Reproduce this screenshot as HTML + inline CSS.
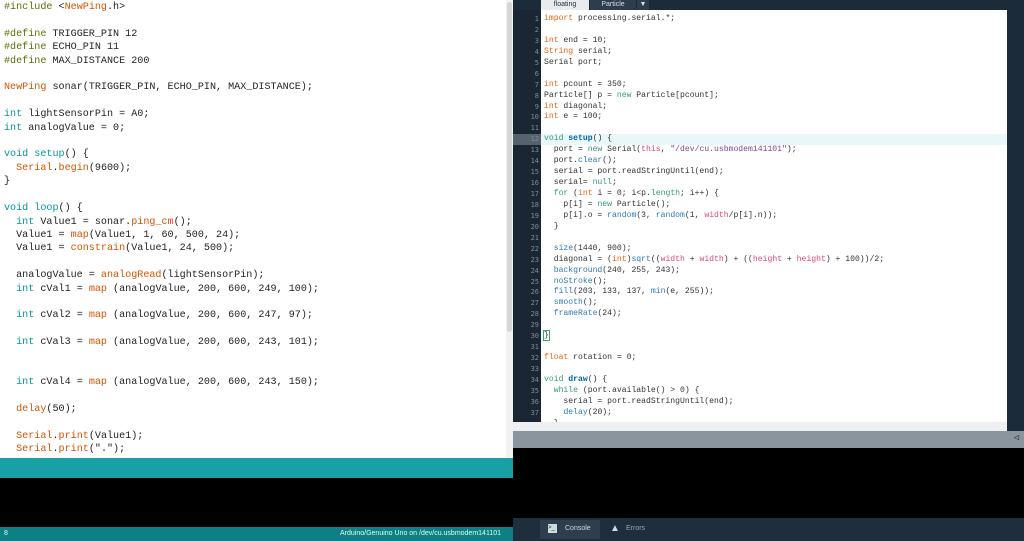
<!DOCTYPE html>
<html><head><meta charset="utf-8"><style>
*{margin:0;padding:0;box-sizing:border-box}
body{width:1024px;height:541px;overflow:hidden;position:relative;background:#000;font-family:"Liberation Mono",monospace}
#L{position:absolute;left:0;top:0;width:513px;height:458px;background:#fff;overflow:hidden}
#L pre{position:absolute;left:4px;top:1px;font-size:10.1px;line-height:13.4px;color:#222;font-family:"Liberation Mono",monospace}
.d{color:#5e6d03}.o{color:#d35400}.t{color:#00979c}
#lsb{position:absolute;left:506px;top:0;width:7px;height:458px;background:#f2f2f2}
#lsb div{position:absolute;left:1px;top:2px;width:5px;height:330px;background:#d6d6d6;border-radius:3px}
#R{position:absolute;left:513px;top:0;width:511px;height:541px;background:#1c2b3a}
#tabs{position:absolute;left:513px;top:0;height:10px;font:7px "Liberation Sans",sans-serif}
.tab{position:absolute;top:0;height:10px;line-height:9px;text-align:center}
#gut{position:absolute;left:513px;top:10px;width:28px;height:412px;background:#1a2633}
#gut pre{position:absolute;right:2px;top:4px;font-size:7px;line-height:10.94px;color:#7d8d9b;text-align:right}
#ed{position:absolute;left:541px;top:10px;width:466px;height:412px;background:#fff;overflow:hidden}
#ed pre{position:absolute;left:3px;top:4px;font-size:8.1px;line-height:10.94px;color:#333;font-family:"Liberation Mono",monospace}
.k{color:#e2661a}.g{color:#33997e}.f{color:#2f79b5}.s{color:#7d4793}.p{color:#d94a7a}.b{color:#006699;font-weight:bold}.v{color:#33997e}
#hl{position:absolute;left:0;top:124px;width:466px;height:11px;background:#e9f7fb}
#ghl{position:absolute;left:0;top:124px;width:28px;height:11px;background:#56636e}
</style></head><body>
<div id="L"><pre><span class="d">#include</span> &lt;<span class="o">NewPing</span>.h&gt;

<span class="d">#define</span> TRIGGER_PIN 12
<span class="d">#define</span> ECHO_PIN 11
<span class="d">#define</span> MAX_DISTANCE 200

<span class="o">NewPing</span> sonar(TRIGGER_PIN, ECHO_PIN, MAX_DISTANCE);

<span class="t">int</span> lightSensorPin = A0;
<span class="t">int</span> analogValue = 0;

<span class="t">void</span> <span class="t">setup</span>() {
  <span class="o">Serial</span>.<span class="o">begin</span>(9600);
}

<span class="t">void</span> <span class="t">loop</span>() {
  <span class="t">int</span> Value1 = sonar.<span class="o">ping_cm</span>();
  Value1 = <span class="o">map</span>(Value1, 1, 60, 500, 24);
  Value1 = <span class="o">constrain</span>(Value1, 24, 500);

  analogValue = <span class="o">analogRead</span>(lightSensorPin);
  <span class="t">int</span> cVal1 = <span class="o">map</span> (analogValue, 200, 600, 249, 100);

  <span class="t">int</span> cVal2 = <span class="o">map</span> (analogValue, 200, 600, 247, 97);

  <span class="t">int</span> cVal3 = <span class="o">map</span> (analogValue, 200, 600, 243, 101);


  <span class="t">int</span> cVal4 = <span class="o">map</span> (analogValue, 200, 600, 243, 150);

  <span class="o">delay</span>(50);

  <span class="o">Serial</span>.<span class="o">print</span>(Value1);
  <span class="o">Serial</span>.<span class="o">print</span>(".");</pre>
<div id="lsb"><div></div></div></div>
<div style="position:absolute;left:0;top:458px;width:513px;height:20px;background:#17a1a5"></div>
<div style="position:absolute;left:0;top:478px;width:513px;height:49px;background:#000"></div>
<div style="position:absolute;left:0;top:527px;width:513px;height:14px;background:#0f7f86;color:#dfe;font:7px 'Liberation Sans',sans-serif;line-height:14px">
<span style="position:absolute;left:4px">8</span><span style="position:absolute;right:12px">Arduino/Genuino Uno on /dev/cu.usbmodem141101</span></div>
<div id="R"></div>
<div id="tabs">
<div class="tab" style="left:28px;width:48px;background:#e8ecef;color:#1c2b3a">floating</div>
<div class="tab" style="left:77px;width:46px;background:#2c3d4e;color:#dde">Particle</div>
<div class="tab" style="left:124px;width:12px;background:#2c3d4e;color:#dde">▼</div>
</div>
<div id="gut"><div id="ghl"></div><pre>1
2
3
4
5
6
7
8
9
10
11
12
13
14
15
16
17
18
19
20
21
22
23
24
25
26
27
28
29
30
31
32
33
34
35
36
37</pre></div>
<div id="ed"><div id="hl"></div><pre><span class="k">import</span> processing.serial.*;

<span class="k">int</span> end = 10;
<span class="k">String</span> serial;
Serial port;

<span class="k">int</span> pcount = 350;
Particle[] p = <span class="g">new</span> Particle[pcount];
<span class="k">int</span> diagonal;
<span class="k">int</span> e = 100;

<span class="g">void</span> <span class="b">setup</span>() {
  port = <span class="g">new</span> Serial(<span class="p">this</span>, <span class="s">"/dev/cu.usbmodem141101"</span>);
  port.<span class="f">clear</span>();
  serial = port.readStringUntil(end);
  serial= <span class="g">null</span>;
  <span class="g">for</span> (<span class="k">int</span> i = 0; i&lt;p.<span class="g">length</span>; i++) {
    p[i] = <span class="g">new</span> Particle();
    p[i].o = <span class="f">random</span>(3, <span class="f">random</span>(1, <span class="p">width</span>/p[i].n));
  }

  <span class="f">size</span>(1440, 900);
  diagonal = (<span class="k">int</span>)<span class="f">sqrt</span>((<span class="p">width</span> + <span class="p">width</span>) + ((<span class="p">height</span> + <span class="p">height</span>) + 100))/2;
  <span class="f">background</span>(240, 255, 243);
  <span class="f">noStroke</span>();
  <span class="f">fill</span>(203, 133, 137, <span class="f">min</span>(e, 255));
  <span class="f">smooth</span>();
  <span class="f">frameRate</span>(24);

<span style="outline:1px solid #3a6">}</span>

<span class="k">float</span> rotation = 0;

<span class="g">void</span> <span class="b">draw</span>() {
  <span class="g">while</span> (port.available() &gt; 0) {
    serial = port.readStringUntil(end);
    <span class="f">delay</span>(20);
  }</pre></div>
<div style="position:absolute;left:513px;top:422px;width:494px;height:9px;background:#eef0f1"></div>
<div style="position:absolute;left:513px;top:431px;width:511px;height:17px;background:#8a959e"><span style="position:absolute;right:5px;top:2px;font-size:9px;color:#223">◁</span></div>
<div style="position:absolute;left:513px;top:448px;width:511px;height:70px;background:#000"></div>
<div style="position:absolute;left:513px;top:518px;width:511px;height:23px;background:#1f2e3c;font:7px 'Liberation Sans',sans-serif;color:#cdd">
<div style="position:absolute;left:27px;top:2px;width:60px;height:19px;background:#2e3e4d"></div>
<span style="position:absolute;left:35px;top:6px;width:9px;height:9px;background:#cdd;color:#1f2e3c;font-size:6px;line-height:9px">&gt;_</span>
<span style="position:absolute;left:52px;top:7px">Console</span>
<span style="position:absolute;left:97px;top:5px;font-size:10px">▲</span>
<span style="position:absolute;left:113px;top:7px;color:#9aa">Errors</span></div>
</body></html>
